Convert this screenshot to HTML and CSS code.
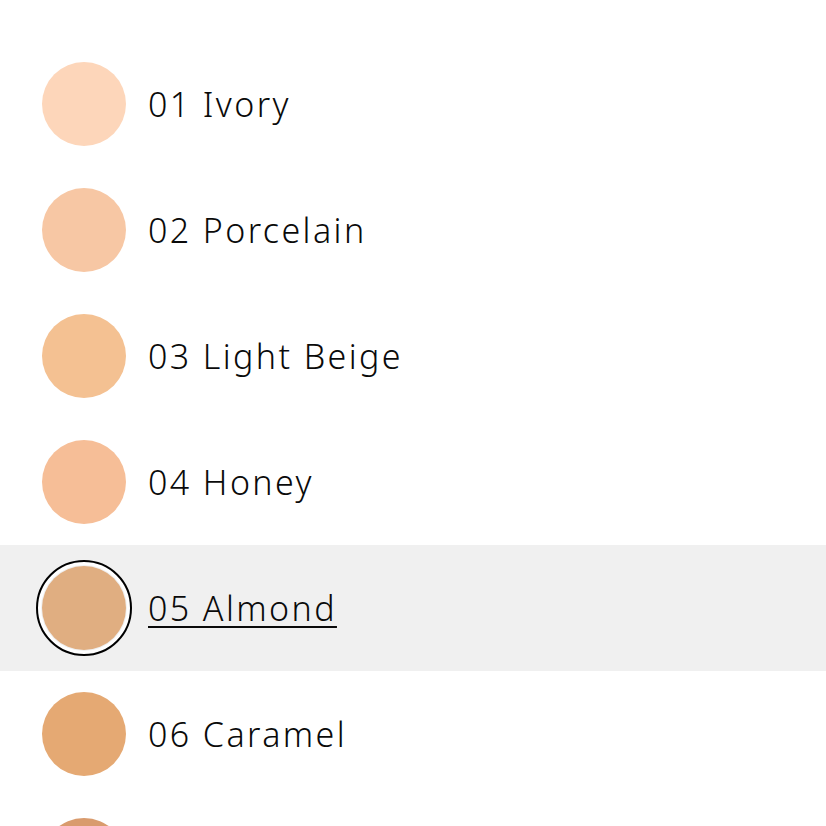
FILE: index.html
```html
<!DOCTYPE html>
<html>
<head>
<meta charset="utf-8">
<link rel="stylesheet" href="styles.css">
</head>
<body>
<ul class="shades">
  <li class="shade"><span class="swatch" style="background:#fdd6ba"></span><span class="name">01 Ivory</span></li>
  <li class="shade"><span class="swatch" style="background:#f7c7a4"></span><span class="name">02 Porcelain</span></li>
  <li class="shade"><span class="swatch" style="background:#f4c192"></span><span class="name">03 Light Beige</span></li>
  <li class="shade"><span class="swatch" style="background:#f6be97"></span><span class="name">04 Honey</span></li>
  <li class="shade selected"><span class="swatch" style="background:#e0ae81"></span><span class="name">05 Almond</span></li>
  <li class="shade"><span class="swatch" style="background:#e5a973"></span><span class="name">06 Caramel</span></li>
  <li class="shade"><span class="swatch" style="background:#d99b6d"></span><span class="name">07 Sand</span></li>
</ul>
</body>
</html>
```
FILE: styles.css
```css
html, body {
  margin: 0;
  padding: 0;
  background: #ffffff;
  overflow: hidden;
  height: 826px;
}
.shades {
  list-style: none;
  margin: 0;
  padding: 41px 0 0 0;
}
.shade {
  height: 126px;
  display: flex;
  align-items: center;
  padding-left: 42px;
  gap: 22px;
}
.swatch {
  width: 84px;
  height: 84px;
  border-radius: 50%;
  flex: none;
  position: relative;
}
.shade.selected {
  background: #f0f0f0;
}
.shade.selected .swatch::after {
  content: "";
  position: absolute;
  left: -6px;
  top: -6px;
  right: -6px;
  bottom: -6px;
  border-radius: 50%;
  border: 2px solid #000;
  box-shadow: inset 0 0 0 3px #fff;
}
.name {
  font-family: "Noto Sans", sans-serif;
  font-weight: 350;
  font-size: 34px;
  line-height: 40px;
  color: #0a0a0a;
  letter-spacing: 2.4px;
}
.shade.selected .name {
  text-decoration: underline;
  text-decoration-thickness: 2px;
  text-underline-offset: 5px;
}
```
